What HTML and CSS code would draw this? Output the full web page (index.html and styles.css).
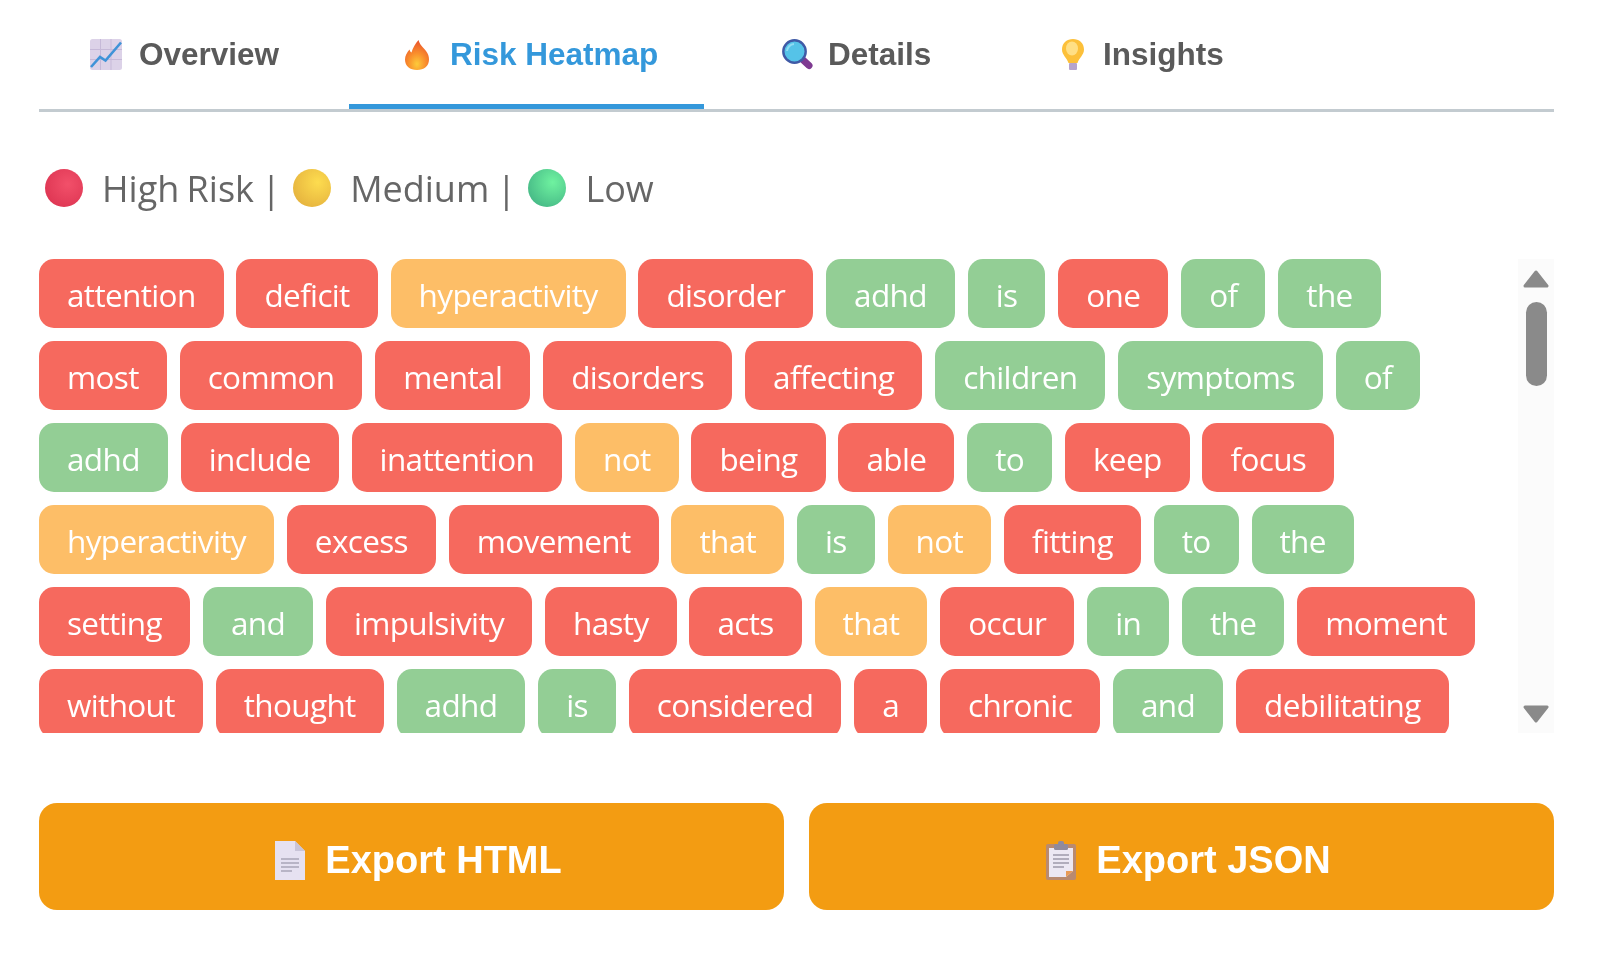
FILE: index.html
```html
<!DOCTYPE html>
<html lang="en">
<head>
<meta charset="utf-8">
<title>Risk Heatmap</title>
<link rel="stylesheet" href="styles.css">
</head>
<body>
<main class="panel">
  <nav class="tabs">
    <a class="tab tab-overview">
      <svg class="tab-icon chart" viewBox="0 0 32 31"><rect x="0" y="0" width="32" height="31" rx="2.500" fill="#dcd2e8"/><path d="M0 10.500H32M0 20.500H32M10.500 0V31M21 0V31" stroke="#c6b9d8" stroke-width="1"/><path d="M1 28L10 18L15.500 21.500L31 3.500" fill="none" stroke="#3f93d8" stroke-width="2.600"/></svg>
      <span>Overview</span>
    </a>
    <a class="tab tab-heatmap active">
      <svg class="tab-icon flame" viewBox="0 0 24 30"><defs><radialGradient id="fl" cx="50%" cy="80%" r="80%"><stop offset="0" stop-color="#fdcb3a"/><stop offset=".45" stop-color="#f98f2c"/><stop offset="1" stop-color="#e9502c"/></radialGradient></defs><path d="M13.500 0C14.500 4.500 18 7 21 11C23 13.500 24 16.500 24 19.500C24 26 19 30 12 30C5 30 0 26 0 19.500C0 15.500 2 12.500 4.500 9.500C5 11 5.500 12 6.500 12.500C7.500 8 10.500 3.500 13.500 0Z" fill="url(#fl)"/></svg>
      <span>Risk Heatmap</span>
    </a>
    <a class="tab tab-details">
      <svg class="tab-icon lens" viewBox="0 0 31 31"><path d="M20 20L27 26.500" stroke="#7e3a91" stroke-width="7" stroke-linecap="round"/><circle cx="12.500" cy="12.500" r="11.200" fill="#55c3e8" stroke="#3f5aa6" stroke-width="2.400"/><path d="M5 12A7.500 7.500 0 0 1 12 5" fill="none" stroke="#8fdcf3" stroke-width="2"/></svg>
      <span>Details</span>
    </a>
    <a class="tab tab-insights">
      <svg class="tab-icon bulb" viewBox="0 0 22 31"><path d="M11 0C5 0 0 4 0 10.500C0 16 5 19 6.500 24H15.500C17 19 22 16 22 10.500C22 4 17 0 11 0Z" fill="#fcc03a"/><ellipse cx="10" cy="9.500" rx="6" ry="7" fill="#ffdf85"/><rect x="7" y="24" width="8" height="7" rx="1" fill="#b6a4cd"/></svg>
      <span>Insights</span>
    </a>
  </nav>

  <p class="legend">
    <span class="dot dot-high"></span><span class="label label-high">High Risk |</span>
    <span class="dot dot-medium"></span><span class="label label-medium">Medium |</span>
    <span class="dot dot-low"></span><span class="label">Low</span>
  </p>

  <section class="heatmap">
    <div class="tags">
      <span class="tag high">attention</span><span class="tag high">deficit</span><span class="tag med">hyperactivity</span><span class="tag high">disorder</span><span class="tag low">adhd</span><span class="tag low">is</span><span class="tag high">one</span><span class="tag low">of</span><span class="tag low">the</span>
      <span class="tag high">most</span><span class="tag high">common</span><span class="tag high">mental</span><span class="tag high">disorders</span><span class="tag high">affecting</span><span class="tag low">children</span><span class="tag low">symptoms</span><span class="tag low">of</span>
      <span class="tag low">adhd</span><span class="tag high">include</span><span class="tag high">inattention</span><span class="tag med">not</span><span class="tag high">being</span><span class="tag high">able</span><span class="tag low">to</span><span class="tag high">keep</span><span class="tag high">focus</span>
      <span class="tag med">hyperactivity</span><span class="tag high">excess</span><span class="tag high">movement</span><span class="tag med">that</span><span class="tag low">is</span><span class="tag med">not</span><span class="tag high">fitting</span><span class="tag low">to</span><span class="tag low">the</span>
      <span class="tag high">setting</span><span class="tag low">and</span><span class="tag high">impulsivity</span><span class="tag high">hasty</span><span class="tag high">acts</span><span class="tag med">that</span><span class="tag high">occur</span><span class="tag low">in</span><span class="tag low">the</span><span class="tag high">moment</span>
      <span class="tag high">without</span><span class="tag high">thought</span><span class="tag low">adhd</span><span class="tag low">is</span><span class="tag high">considered</span><span class="tag high">a</span><span class="tag high">chronic</span><span class="tag low">and</span><span class="tag high">debilitating</span>
    </div>
    <div class="scrollbar">
      <svg class="arrow arrow-up" viewBox="0 0 26 18"><path d="M13 2L24 16H2Z" fill="#8a8a8a" stroke="#8a8a8a" stroke-width="3" stroke-linejoin="round"/></svg>
      <span class="thumb"></span>
      <svg class="arrow arrow-down" viewBox="0 0 26 18"><path d="M13 16L24 2H2Z" fill="#8a8a8a" stroke="#8a8a8a" stroke-width="3" stroke-linejoin="round"/></svg>
    </div>
  </section>

  <div class="actions">
    <button class="export">
      <svg class="btn-icon" viewBox="0 0 30 39"><path d="M0 0H20L30 10V39H0Z" fill="#e6e1f1"/><path d="M20 0L30 10H20Z" fill="#c9c4d8"/><path d="M6 18H24M6 22H24M6 26H24M6 30H17" stroke="#a9a5b8" stroke-width="1.600"/></svg>
      <span>Export HTML</span>
    </button>
    <button class="export">
      <svg class="btn-icon" viewBox="0 0 30 39"><rect x="0" y="3" width="30" height="36" rx="2" fill="#b98a6f"/><path d="M3 7H27V30L20 36H3Z" fill="#ece8f3"/><path d="M20 36L27 30H20Z" fill="#e89a55"/><rect x="8" y="3" width="14" height="6" rx="1.500" fill="#8f8a9c"/><rect x="12" y="0" width="6" height="5" rx="2" fill="#8f8a9c"/><path d="M7 14H23M7 18H23M7 22H23M7 26H18" stroke="#9d99aa" stroke-width="1.500"/></svg>
      <span>Export JSON</span>
    </button>
  </div>
</main>
</body>
</html>
```
FILE: styles.css
```css
* { box-sizing: border-box; }
html, body { margin: 0; height: 100%; background: #fff; overflow: hidden; }
.panel { padding: 0 46px 0 39px; height: 955px; filter: blur(0.5px); }

.tabs {
  display: flex;
  height: 112px;
  border-bottom: 3px solid #c3cbd0;
  font: 700 31.5px "Liberation Sans", Arial, sans-serif;
  color: #5a5a5a;
}
.tab {
  display: flex;
  align-items: center;
  gap: 17px;
  height: 109px;
  padding-top: 5px;
  border-bottom: 5px solid transparent;
  white-space: nowrap;
}
.tab-overview { width: 310px; padding-left: 51px; }
.tab-heatmap { width: 355px; padding-left: 56px; gap: 21px; }
.tab-details { width: 355px; padding-left: 78px; gap: 15px; }
.tab-insights { gap: 19px; }
.active { border-bottom-color: #3498db; color: #3498db; }
.tab-icon { height: 31px; flex: none; }
.chart { width: 32px; }
.flame { width: 24px; height: 30px; }
.lens { width: 31px; }
.bulb { width: 22px; margin-left: 3px; }

.legend {
  display: flex;
  align-items: center;
  height: 38px;
  margin: 57px 0 52px 6px;
  font: 36px "Open Sans", "Noto Sans", sans-serif;
  word-spacing: -2px;
  color: #666;
}
.dot { width: 38px; height: 38px; border-radius: 50%; flex: none; margin-right: 19px; }
.label-high, .label-medium { margin-right: 12px; }
.dot-high { background: radial-gradient(circle at 60% 40%, #f2506a, #d92f4d); }
.dot-medium { background: radial-gradient(circle at 65% 35%, #fddc4f, #e0a93a); }
.dot-low { background: radial-gradient(circle at 65% 35%, #6ff2a0, #3cab80); }

.heatmap {
  display: flex;
  justify-content: space-between;
  height: 474px;
  overflow: hidden;
}
.tags {
  display: flex;
  flex-wrap: wrap;
  align-content: flex-start;
  gap: 13px 12.9px;
  width: 1460px;
  font: 31.5px/71px "Open Sans", "Noto Sans", sans-serif;
  letter-spacing: -0.65px;
  color: #fff;
}
.tag { height: 69px; padding: 0 28px; border-radius: 15px; white-space: nowrap; }
.high { background: #f6695e; }
.med { background: #fdbe67; }
.low { background: #93ce95; }

.scrollbar {
  width: 36px;
  background: #fbfbfb;
  display: flex;
  flex-direction: column;
  align-items: center;
}
.arrow { width: 26px; height: 18px; flex: none; }
.arrow-up { margin-top: 11px; }
.arrow-down { margin-top: auto; margin-bottom: 10px; }
.thumb { width: 21px; height: 84px; margin-top: 14px; background: #8a8a8a; border-radius: 10.5px; }

.actions {
  display: flex;
  gap: 25px;
  margin-top: 70px;
}
.export {
  flex: 1;
  height: 107px;
  display: flex;
  align-items: center;
  justify-content: center;
  gap: 20px;
  padding: 7px 0 0 14px;
  border: 0;
  border-radius: 18px;
  background: #f39c12;
  color: #fff;
  font: 700 38px "Liberation Sans", Arial, sans-serif;
}
.btn-icon { width: 30px; height: 39px; flex: none; }
```
